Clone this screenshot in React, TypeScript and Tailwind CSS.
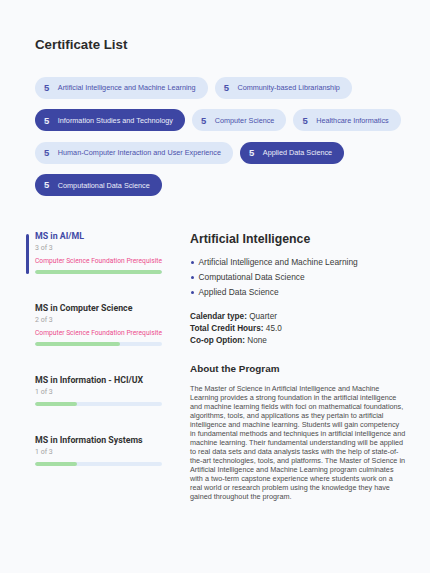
const certificates = [
  { label: "Artificial Intelligence and Machine Learning", selected: false },
  { label: "Community-based Librarianship", selected: false },
  { label: "Information Studies and Technology", selected: true },
  { label: "Computer Science", selected: false },
  { label: "Healthcare Informatics", selected: false },
  { label: "Human-Computer Interaction and User Experience", selected: false },
  { label: "Applied Data Science", selected: true },
  { label: "Computational Data Science", selected: true },
];

const programs = [
  { name: "MS in AI/ML", done: 3, total: 3, prereq: true, active: true },
  { name: "MS in Computer Science", done: 2, total: 3, prereq: true, active: false },
  { name: "MS in Information - HCI/UX", done: 1, total: 3, prereq: false, active: false },
  { name: "MS in Information Systems", done: 1, total: 3, prereq: false, active: false },
];

const focusAreas = [
  "Artificial Intelligence and Machine Learning",
  "Computational Data Science",
  "Applied Data Science",
];

function CertificatePill({ label, selected }: { label: string; selected: boolean }) {
  return (
    <span
      className={`flex h-[22px] items-center gap-[8.5px] rounded-full pl-[9px] pr-[12px] ${
        selected ? "bg-[#3d46a3] text-[#eceefa]" : "bg-[#dde7f7] text-[#4a51ab]"
      }`}
    >
      <span className="text-[9.5px] font-bold leading-none">5</span>
      <span className="text-[7.26px] leading-none">{label}</span>
    </span>
  );
}

function ProgramItem({
  name,
  done,
  total,
  prereq,
  active,
}: {
  name: string;
  done: number;
  total: number;
  prereq: boolean;
  active: boolean;
}) {
  const progress = Math.round((done / total) * 100);

  return (
    <div className="flex gap-[6px]">
      <div
        className={`mt-[4px] w-[3px] shrink-0 rounded-full ${active ? "bg-[#3d46a3]" : "bg-transparent"}`}
      />
      <div className="w-[127px]">
        <p
          className={`whitespace-nowrap text-[8.8px] font-bold leading-[12px] ${
            active ? "text-[#4149a6]" : "text-[#333333]"
          }`}
        >
          {name}
        </p>
        <p className="text-[7px] leading-[13px] text-[#a3a3a3]">
          {done} of {total}
        </p>
        {prereq && (
          <p className="whitespace-nowrap text-[6.7px] leading-[12px] text-[#ec4d8c]">
            Computer Science Foundation Prerequisite
          </p>
        )}
        <div className="mt-[3px] h-[4px] overflow-hidden rounded-full bg-[#e2ebf8]">
          <div className="h-full rounded-full bg-[#a6dea4]" style={{ width: `${progress}%` }} />
        </div>
      </div>
    </div>
  );
}

export default function App() {
  return (
    <div className="min-h-[573px] bg-[#f9fafc] pb-10 pl-[35px] pr-[20px] pt-[37px] font-['Liberation_Sans',Arial,sans-serif]">
      <h1 className="text-[13.3px] font-bold leading-[16px] text-[#2b2b2b]">Certificate List</h1>

      <div className="mt-[24px] flex flex-wrap gap-x-[7px] gap-y-[10.4px]">
        {certificates.map((c) => (
          <CertificatePill key={c.label} label={c.label} selected={c.selected} />
        ))}
      </div>

      <div className="mt-[34px] flex items-start">
        <div className="-ml-[9px] flex flex-col gap-[28px] font-['Roboto',sans-serif]">
          {programs.map((p) => (
            <ProgramItem key={p.name} {...p} />
          ))}
        </div>

        <div className="ml-[28px] mt-[1.5px] w-[216.2px] text-[#3a3a3a]">
          <h2 className="text-[12.3px] font-bold leading-[15px] text-[#2b2b2b]">Artificial Intelligence</h2>

          <ul className="mt-[8px]">
            {focusAreas.map((area) => (
              <li key={area} className="flex items-center gap-[4.5px] text-[8.4px] leading-[15px]">
                <span className="ml-[1px] h-[3px] w-[3px] shrink-0 rounded-full bg-[#3d46a3]" />
                {area}
              </li>
            ))}
          </ul>

          <div className="mt-[11.5px] text-[8.2px] leading-[12px]">
            <p>
              <span className="font-bold text-[#2b2b2b]">Calendar type:</span> Quarter
            </p>
            <p>
              <span className="font-bold text-[#2b2b2b]">Total Credit Hours:</span> 45.0
            </p>
            <p>
              <span className="font-bold text-[#2b2b2b]">Co-op Option:</span> None
            </p>
          </div>

          <h3 className="mt-[15.7px] text-[9.9px] font-bold leading-[12px] text-[#2b2b2b]">About the Program</h3>

          <p className="mt-[8.8px] text-[7.26px] leading-[9px] text-[#4d4d4d]">
            The Master of Science in Artificial Intelligence and Machine Learning provides a strong foundation in the
            artificial intelligence and machine learning fields with foci on mathematical foundations, algorithms, tools,
            and applications as they pertain to artificial intelligence and machine learning. Students will gain
            competency in fundamental methods and techniques in artificial intelligence and machine learning. Their
            fundamental understanding will be applied to real data sets and data analysis tasks with the help of
            state-of-the-art technologies, tools, and platforms. The Master of Science in Artificial Intelligence and
            Machine Learning program culminates with a two-term capstone experience where students work on a real world
            or research problem using the knowledge they have gained throughout the program.
          </p>
        </div>
      </div>
    </div>
  );
}
